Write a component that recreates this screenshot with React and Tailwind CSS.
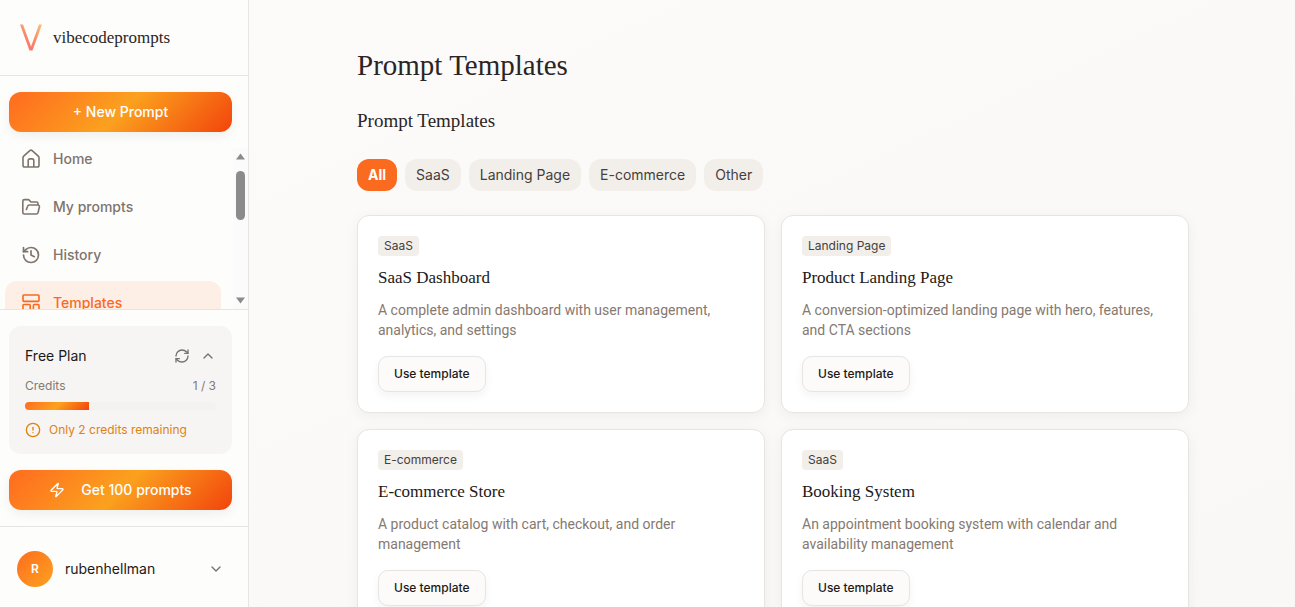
import { useState } from "react";
import { ChevronDown, ChevronUp, CircleAlert, History, RefreshCw, Zap } from "lucide-react";

function HomeIcon() {
  return (
    <svg width="20" height="20" viewBox="0 0 20 20" fill="none" stroke="currentColor" strokeWidth="1.6" strokeLinejoin="round">
      <path d="M2 8.6c0-.6.3-1.1.7-1.5L8.8 1.7a1.8 1.8 0 0 1 2.4 0l6.1 5.4c.4.4.7.9.7 1.5v7.6a1.8 1.8 0 0 1-1.8 1.8H3.8A1.8 1.8 0 0 1 2 16.2Z" />
      <path d="M7.2 18v-6.4c0-1 .7-1.7 1.7-1.7h2.2c1 0 1.7.7 1.7 1.7V18" />
    </svg>
  );
}

function FolderIcon() {
  return (
    <svg width="20" height="20" viewBox="0 0 20 20" fill="none" stroke="currentColor" strokeWidth="1.6" strokeLinecap="round" strokeLinejoin="round">
      <path d="M17 8V6.6A1.6 1.6 0 0 0 15.4 5H9.9L8.2 3.1A1.6 1.6 0 0 0 7 2.6H3.4A1.6 1.6 0 0 0 1.8 4.2v11.2A1.6 1.6 0 0 0 3.4 17h12c.8 0 1.4-.5 1.6-1.2L18.4 10c.3-1-.4-2-1.5-2H8.2c-.8 0-1.400.5-1.600 1.200L5.400 12.500" />
    </svg>
  );
}

function TemplatesIcon() {
  return (
    <svg width="20" height="20" viewBox="0 0 20 20" fill="none" stroke="currentColor" strokeWidth="1.6" strokeLinejoin="round">
      <rect x="2" y="2" width="16" height="6.4" rx="0.8" />
      <rect x="2" y="11.5" width="7.2" height="6.5" rx="0.8" />
      <rect x="12.4" y="11.5" width="5.6" height="6.5" rx="0.8" />
    </svg>
  );
}

const navItems = [
  { label: "Home", icon: <HomeIcon /> },
  { label: "My prompts", icon: <FolderIcon /> },
  { label: "History", icon: <History size={20} strokeWidth={2} /> },
  { label: "Templates", icon: <TemplatesIcon />, active: true },
];

const categories = ["All", "SaaS", "Landing Page", "E-commerce", "Other"];

const templates = [
  {
    category: "SaaS",
    title: "SaaS Dashboard",
    description: "A complete admin dashboard with user management, analytics, and settings",
  },
  {
    category: "Landing Page",
    title: "Product Landing Page",
    description: "A conversion-optimized landing page with hero, features, and CTA sections",
  },
  {
    category: "E-commerce",
    title: "E-commerce Store",
    description: "A product catalog with cart, checkout, and order management",
  },
  {
    category: "SaaS",
    title: "Booking System",
    description: "An appointment booking system with calendar and availability management",
  },
];

function Logo() {
  return (
    <svg width="24" height="28" viewBox="0 0 24 28" fill="none">
      <defs>
        <linearGradient id="logo" x1="24" y1="0" x2="8" y2="28" gradientUnits="userSpaceOnUse">
          <stop stopColor="#fdc27c" />
          <stop offset="0.5" stopColor="#fb8d6c" />
          <stop offset="1" stopColor="#fb6f6a" />
        </linearGradient>
      </defs>
      <path d="M1 .5h3L12 22.5 20 .5h3L13.5 26.5h-3Z" fill="url(#logo)" />
    </svg>
  );
}

function Scrollbar() {
  return (
    <div className="mt-[11px] flex w-[15px] flex-col items-center bg-[#fcfbfb] py-[5px]" aria-hidden="true">
      <svg width="9" height="7" viewBox="0 0 9 7" fill="#8b8b8b">
        <path d="M4.5 0.5 9 6.5H0Z" />
      </svg>
      <div className="mt-[11px] h-[49px] w-[9px] rounded-full bg-[#8b8b8b]" />
      <svg className="mt-auto" width="9" height="7" viewBox="0 0 9 7" fill="#8b8b8b">
        <path d="M4.5 6.5 0 0.5h9Z" />
      </svg>
    </div>
  );
}

function Sidebar() {
  return (
    <aside className="mr-0.5 flex h-full w-[249px] shrink-0 flex-col border-r border-[#e7e5e4] bg-[#fdfdfc]">
      <a href="#" className="flex h-[76px] shrink-0 items-center gap-2.5 border-b border-[#e7e5e4] pl-[19px]">
        <Logo />
        <span className="font-['Liberation_Serif',serif] text-[17px] text-[#292524]">vibecodeprompts</span>
      </a>

      <div className="pt-4 pr-4 pb-[5px] pl-[9px]">
        <button className="h-10 w-full rounded-xl bg-[linear-gradient(135deg,#ff6b1f_0%,#fba11e_50%,#f2440c_100%)] text-sm font-medium text-white shadow-[0_4px_12px_rgba(0,0,0,0.06)]">
          + New Prompt
        </button>
      </div>

      <div className="flex min-h-0 flex-1 overflow-hidden pl-[5px]">
        <nav className="flex flex-1 flex-col gap-1">
          {navItems.map(({ label, icon, active }) => (
            <a
              key={label}
              href="#"
              className={`mr-3 flex h-11 shrink-0 items-center gap-3 rounded-xl px-4 text-sm font-medium ${
                active ? "bg-[#fdeee6] text-[#f96a1f]" : "text-[#7f746c]"
              }`}
            >
              {icon}
              {label}
            </a>
          ))}
        </nav>
        <Scrollbar />
      </div>

      <div className="flex flex-col gap-4 border-t border-[#e7e5e4] py-4 pr-4 pl-[9px]">
        <section className="rounded-xl bg-[#f6f5f3] px-4 pt-5 pb-4">
          <div className="flex h-5 items-center">
            <h2 className="flex-1 text-sm text-[#1c1917]">Free Plan</h2>
            <button aria-label="Refresh" className="mr-2.5 text-[#78716c]">
              <RefreshCw size={16} strokeWidth={2} />
            </button>
            <button aria-label="Collapse" className="text-[#78716c]">
              <ChevronUp size={16} strokeWidth={2} />
            </button>
          </div>
          <div className="mt-3 flex justify-between text-xs text-[#857970]">
            <span>Credits</span>
            <span>1 / 3</span>
          </div>
          <div className="mt-2 h-2 overflow-hidden rounded-full bg-[#f4f2f0]">
            <div className="h-full w-1/3 bg-[linear-gradient(135deg,#ff6b1f_0%,#fba11e_50%,#f2440c_100%)]" />
          </div>
          <p className="mt-3 flex items-center gap-2 text-xs text-[#df8212]">
            <CircleAlert size={16} strokeWidth={2} />
            Only 2 credits remaining
          </p>
        </section>
        <button className="flex h-10 w-full items-center justify-center gap-4 rounded-xl bg-[linear-gradient(135deg,#ff6b1f_0%,#fba11e_50%,#f2440c_100%)] text-sm font-medium text-white shadow-[0_4px_12px_rgba(0,0,0,0.06)]">
          <Zap size={16} strokeWidth={2} />
          Get 100 prompts
        </button>
      </div>

      <button className="flex h-[81px] shrink-0 items-center gap-3 border-t border-[#e7e5e4] pt-1 pr-6 pl-[17px] text-left">
        <span className="flex size-9 items-center justify-center rounded-full bg-linear-to-br from-[#ff6b1f] to-[#fba11e] text-xs font-semibold text-white">
          R
        </span>
        <span className="flex-1 text-sm text-[#1c1917]">rubenhellman</span>
        <ChevronDown size={16} strokeWidth={2} className="text-[#78716c]" />
      </button>
    </aside>
  );
}

function TemplateCard({ category, title, description }) {
  return (
    <article className="flex flex-col items-start rounded-xl border border-[#e7e5e0] bg-white p-5 shadow-[0_3px_14px_rgba(0,0,0,0.05)]">
      <span className="h-5 rounded-sm bg-[#f2eeea] px-1.5 text-xs leading-5 text-[#44403c]">{category}</span>
      <h3 className="mt-2 font-['Liberation_Serif',serif] text-[17px] leading-7 text-[#1c1917]">{title}</h3>
      <p className="mt-2 font-['Roboto',sans-serif] text-sm text-[#857970]">{description}</p>
      <button className="mt-4 h-9 rounded-[10px] border border-[#e7e5e4] bg-[#fcfbfa] px-[15px] text-xs font-medium text-[#1c1917] shadow-[0_4px_10px_rgba(0,0,0,0.05)]">
        Use template
      </button>
    </article>
  );
}

export default function App() {
  const [category, setCategory] = useState("All");
  const visible = category === "All" ? templates : templates.filter((t) => t.category === category);

  return (
    <div className="flex h-screen overflow-hidden bg-linear-to-br from-[#fcfbfa] to-[#faf8f6] font-['Inter',sans-serif]">
      <Sidebar />
      <main className="min-w-0 flex-1 overflow-hidden">
        <div className="mx-auto max-w-4xl px-8 pt-[47px] pb-12">
          <h1 className="font-['Liberation_Serif',serif] text-[29px] leading-9 text-[#292524]">Prompt Templates</h1>
          <h2 className="mt-6 font-['Liberation_Serif',serif] text-[19px] leading-7 text-[#292524]">Prompt Templates</h2>

          <div className="mt-6 flex flex-wrap gap-2">
            {categories.map((name) => (
              <button
                key={name}
                onClick={() => setCategory(name)}
                className={`h-8 rounded-xl px-[11px] text-sm ${
                  name === category ? "bg-[#fb6b1f] font-bold text-white" : "bg-[#f2efeb] text-[#44403c]"
                }`}
              >
                {name}
              </button>
            ))}
          </div>

          <div className="mt-6 grid grid-cols-2 gap-4">
            {visible.map((template) => (
              <TemplateCard key={template.title} {...template} />
            ))}
          </div>
        </div>
      </main>
    </div>
  );
}
